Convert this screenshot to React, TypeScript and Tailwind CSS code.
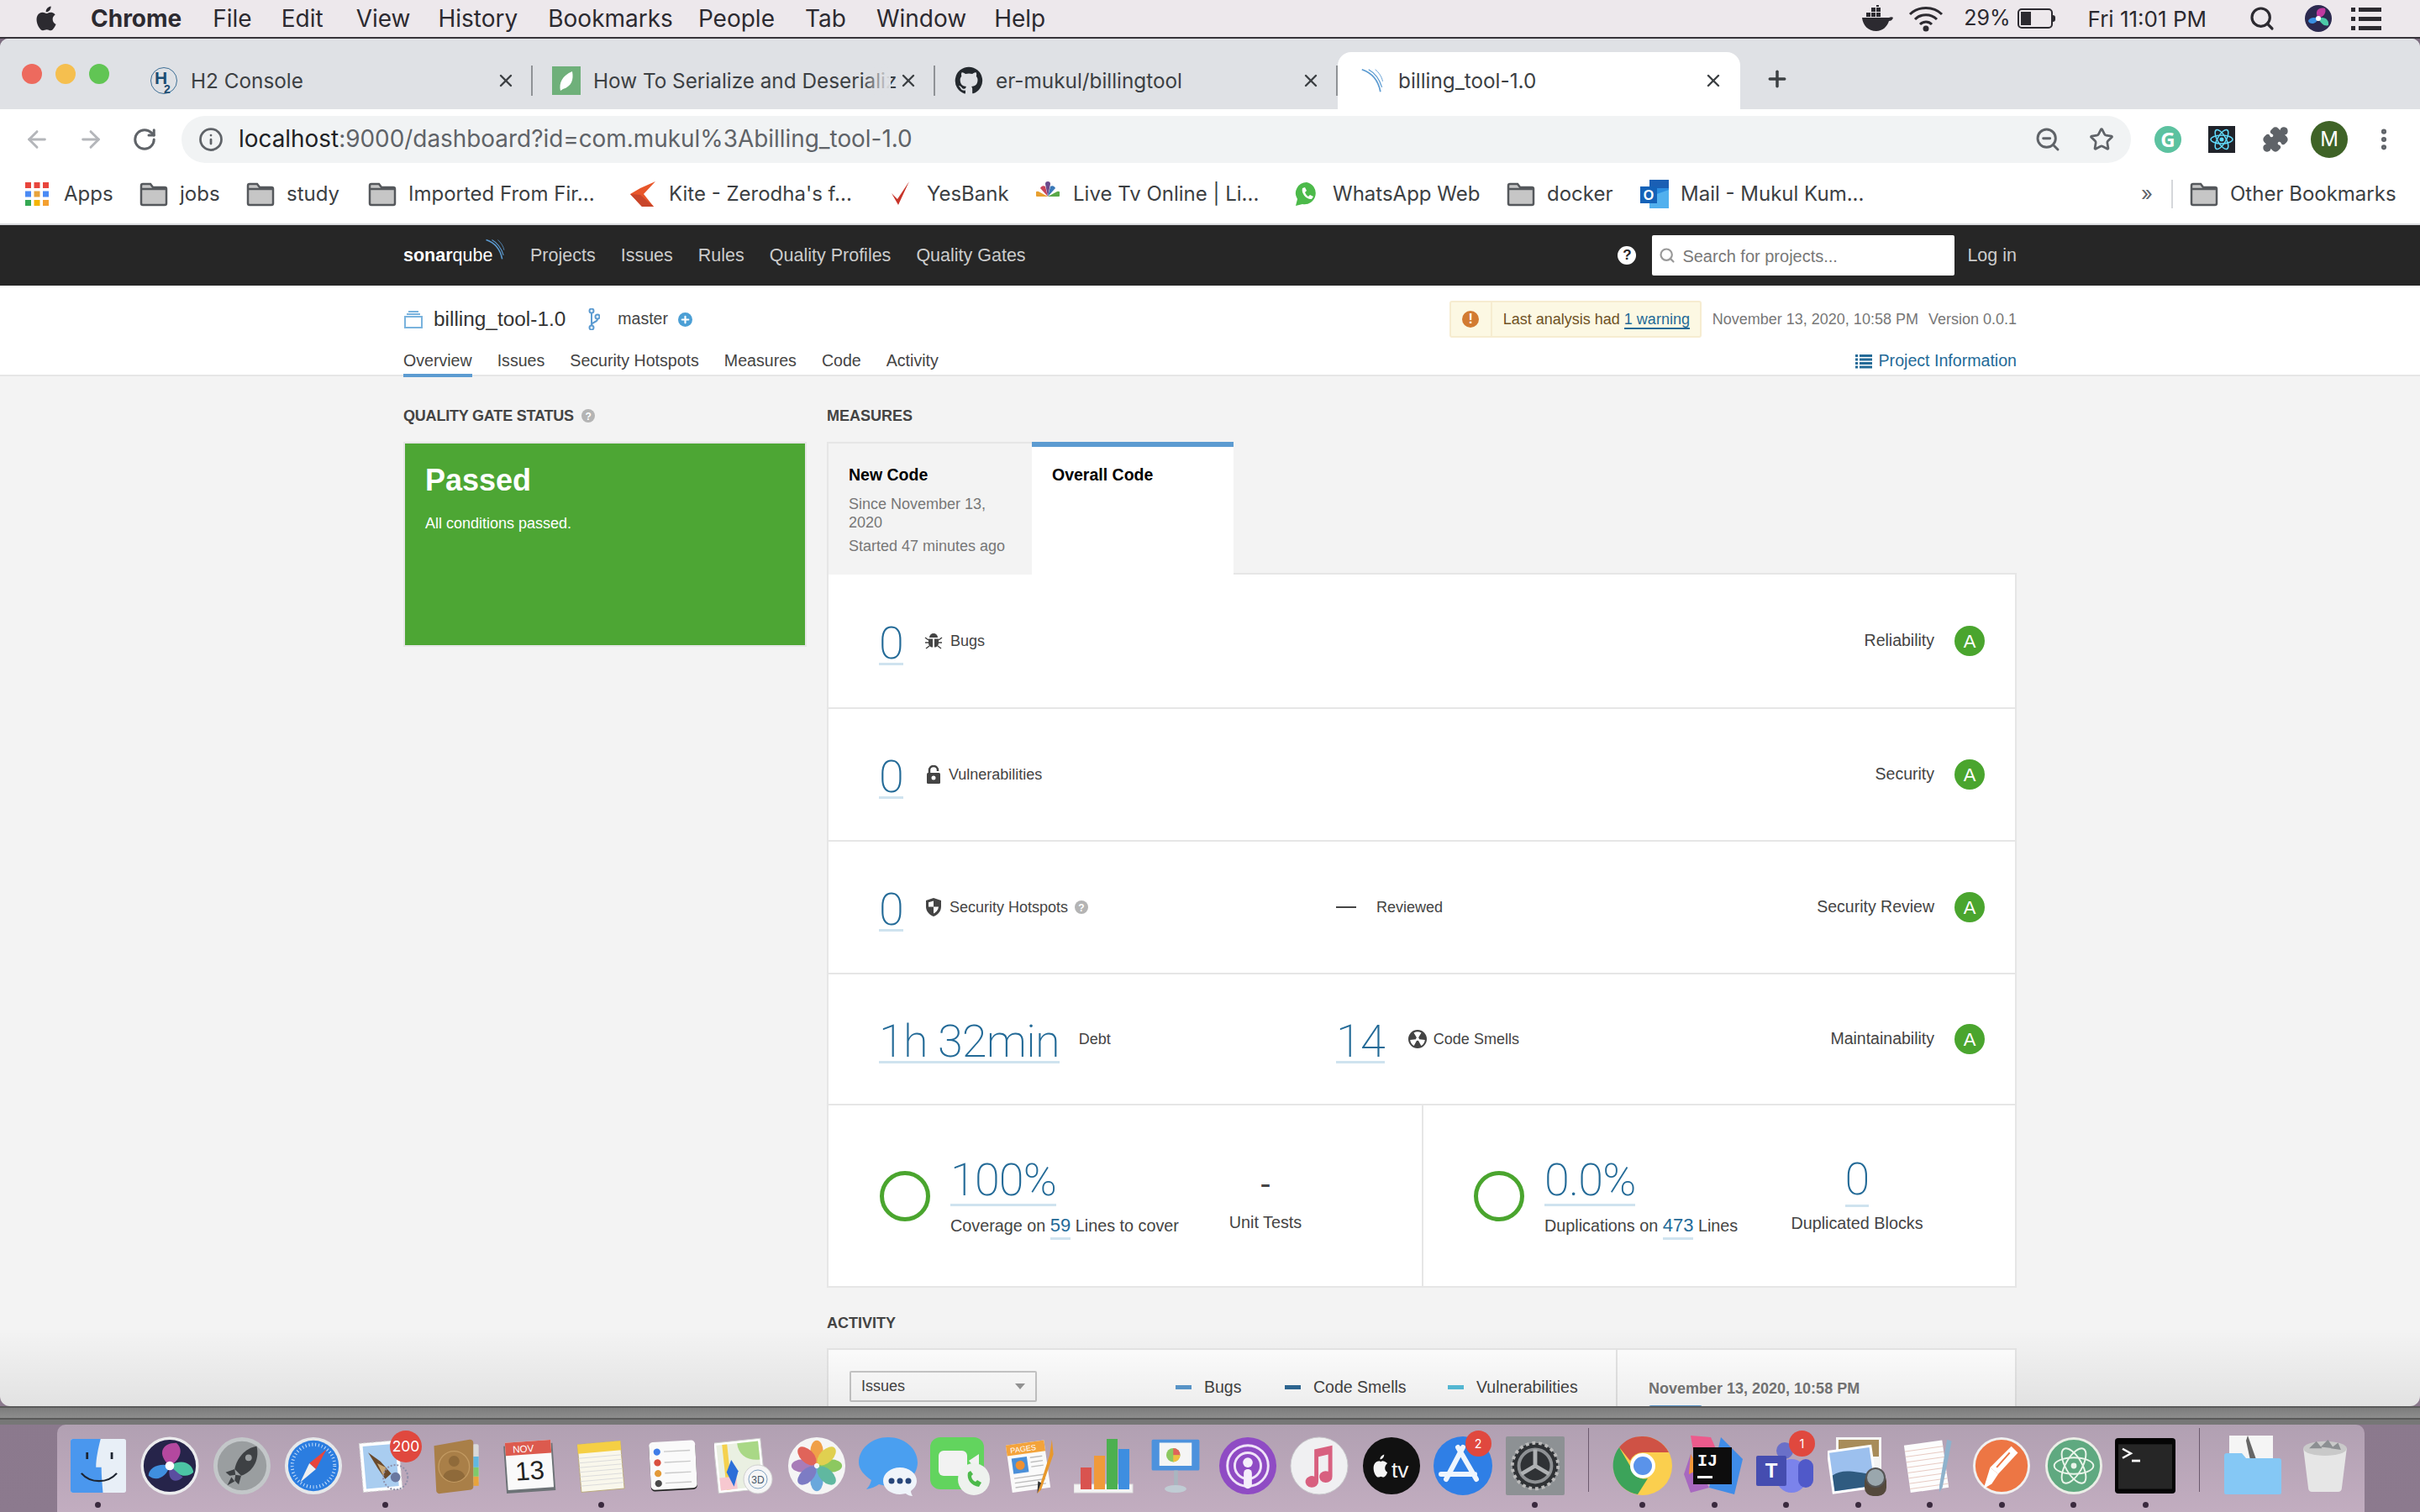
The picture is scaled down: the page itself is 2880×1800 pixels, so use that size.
import React from "react";
import { ArrowLeft, ArrowRight, RotateCw, Info, Star, X, Plus, Puzzle, Search, ZoomOut, EllipsisVertical } from "lucide-react";

const sys = "font-['Inter','Liberation_Sans',sans-serif]";
const sq = "font-['Liberation_Sans',Arial,sans-serif]";
const big = "font-['Roboto','Liberation_Sans',sans-serif] font-extralight";

function Folder() {
  return (
    <svg width="34" height="30" viewBox="0 0 34 30" className="shrink-0">
      <path d="M2 5a2 2 0 0 1 2-2h9l3 4h14a2 2 0 0 1 2 2v17a2 2 0 0 1-2 2H4a2 2 0 0 1-2-2z" fill="#c6c6c6" stroke="#55585c" strokeWidth="2.5" />
      <path d="M2 9h30" stroke="#55585c" strokeWidth="2.5" />
    </svg>
  );
}

function Tab({ icon, title, active, fade }: { icon: React.ReactNode; title: string; active?: boolean; fade?: boolean }) {
  return (
    <div className={`relative flex h-[68px] w-[479px] shrink-0 items-center ${active ? "rounded-t-[16px] bg-white" : ""}`}>
      <div className="flex w-[57px] shrink-0 justify-end">{icon}</div>
      <span className={`ml-[15px] whitespace-nowrap text-[24.3px] text-[#3c4043] ${sys}`}>
        {title}
      </span>
      {fade && <div className="absolute left-[392px] top-[12px] h-[40px] w-[34px] bg-gradient-to-r from-transparent to-[#dfe1e5]" />}
      <X size={24} strokeWidth={2.4} className="absolute right-[20px] text-[#3c4043]" />
      {!active && <div className="absolute right-0 top-[16px] h-[36px] w-[2px] bg-[#8f9296]" />}
    </div>
  );
}

function H2Icon() {
  return (
    <svg width="34" height="34" viewBox="0 0 34 34">
      <circle cx="17" cy="17" r="15.5" fill="none" stroke="#3e6f95" strokeWidth="1" />
      <text x="6" y="21" fontSize="21" fontWeight="700" fill="#1d4d73" fontFamily="Liberation Sans">H</text>
      <text x="17" y="32" fontSize="14" fontWeight="700" fill="#1d4d73" fontFamily="Liberation Sans">2</text>
    </svg>
  );
}
function LeafIcon() {
  return (
    <svg width="34" height="34" viewBox="0 0 34 34">
      <rect width="34" height="34" fill="#6fb07a" />
      <path d="M10 29c-2-9 2-18 14-23 2 10-1 18-11 21z" fill="#fff" />
    </svg>
  );
}
function GithubIcon() {
  return (
    <svg width="34" height="34" viewBox="0 0 24 24" fill="#24292e">
      <path d="M12 .5a11.5 11.5 0 0 0-3.64 22.41c.58.1.79-.25.79-.56v-2.2c-3.2.7-3.87-1.37-3.87-1.37-.52-1.33-1.28-1.69-1.28-1.69-1.05-.71.08-.7.08-.7 1.16.08 1.77 1.19 1.77 1.19 1.03 1.76 2.7 1.25 3.36.96.1-.75.4-1.25.73-1.54-2.55-.29-5.24-1.28-5.24-5.68 0-1.26.45-2.28 1.19-3.09-.12-.29-.52-1.46.11-3.05 0 0 .97-.31 3.17 1.18a11 11 0 0 1 5.77 0c2.2-1.49 3.17-1.18 3.17-1.18.63 1.59.23 2.76.11 3.05.74.81 1.19 1.83 1.19 3.09 0 4.41-2.69 5.38-5.25 5.67.41.36.78 1.06.78 2.13v3.16c0 .31.21.67.8.56A11.5 11.5 0 0 0 12 .5z" />
    </svg>
  );
}
function SonarWaves({ size = 30 }: { size?: number }) {
  return (
    <svg width={size} height={size} viewBox="0 0 34 34" fill="none" stroke="#5c9bd1">
      <path d="M2 2c12 4 22 14 25 30" strokeWidth="2" />
      <path d="M11 2c9 5 15 14 18 24" strokeWidth="1.4" />
      <path d="M20 2c5 4 9 10 10 16" strokeWidth="1" />
    </svg>
  );
}

function BM({ w, icon, label, gap = 14 }: { w: number; icon: React.ReactNode; label: string; gap?: number }) {
  return (
    <div className="flex shrink-0 items-center" style={{ width: w, gap }}>
      <div className="flex shrink-0 items-center justify-center">{icon}</div>
      <span className={`whitespace-nowrap text-[24px] text-[#3c4043] ${sys}`}>{label}</span>
    </div>
  );
}

function AppsIcon() {
  const c = ["#e8453c", "#e8453c", "#e8453c", "#4a8af4", "#e8a33c", "#4a8af4", "#34a853", "#f4b400", "#f4a030"];
  return (
    <svg width="28" height="28" viewBox="0 0 28 28">
      {c.map((f, i) => (
        <rect key={i} x={(i % 3) * 10.5} y={Math.floor(i / 3) * 10.5} width="7" height="7" fill={f} />
      ))}
    </svg>
  );
}

function Rating() {
  return (
    <div className={`flex h-[36px] w-[36px] shrink-0 items-center justify-center rounded-full bg-[#4aa52e] text-[22px] text-white ${sq}`}>A</div>
  );
}

function Num({ children, cls = "" }: { children: React.ReactNode; cls?: string }) {
  return (
    <span className={`mt-[9px] inline-block border-b-[3px] border-[#cfe3ef] text-[54px] leading-[46px] tracking-[-0.8px] text-[#236a97] ${big} ${cls}`}>
      {children}
    </span>
  );
}

function Row({ children, right, h }: { children: React.ReactNode; right: string; h: number }) {
  return (
    <div className={`flex items-center border-b-[2px] border-[#e6e6e6] pl-[60px] pr-[36px] text-[18px] text-[#444] ${sq}`} style={{ height: h }}>
      {children}
      <div className="ml-auto flex items-center gap-[24px] text-[19.5px]">
        <span>{right}</span>
        <Rating />
      </div>
    </div>
  );
}

const QMark = () => (
  <svg width="16" height="16" viewBox="0 0 16 16" className="shrink-0">
    <circle cx="8" cy="8" r="8" fill="#b4b4b4" />
    <text x="8" y="12.5" textAnchor="middle" fontSize="12" fontWeight="700" fill="#fff" fontFamily="Liberation Sans">?</text>
  </svg>
);

const BugIcon = () => (
  <svg width="22" height="22" viewBox="0 0 22 22" fill="#444" stroke="#444">
    <path d="M6 7a5 5 0 0 1 10 0z" stroke="none" />
    <path d="M5 8.500h5v10c-3 0-5-2-5-5zM12 8.500h5v5c0 3-2 5-5 5z" stroke="none" />
    <path d="M1 7l4 3M21 7l-4 3M1 13h4M21 13h-4M2 20l4-3M20 20l-4-3" strokeWidth="1.500" fill="none" />
  </svg>
);
const LockIcon = () => (
  <svg width="16" height="22" viewBox="0 0 16 22">
    <path d="M3 10V6a5 5 0 0 1 10 0v1" fill="none" stroke="#444" strokeWidth="2.500" />
    <rect y="9" width="16" height="13" rx="1.500" fill="#444" />
    <circle cx="8" cy="15" r="2.500" fill="#fff" />
  </svg>
);
const ShieldIcon = () => (
  <svg width="20" height="22" viewBox="0 0 20 22">
    <path d="M10 0l9 3v7c0 6-4 10-9 12C5 20 1 16 1 10V3z" fill="#444" />
    <path d="M10 3.500v7H4V5.200zM10 10.500h6c-.5 4-3 6.500-6 8z" fill="#fff" />
  </svg>
);
const SmellIcon = () => (
  <svg width="22" height="22" viewBox="0 0 22 22">
    <circle cx="11" cy="11" r="11" fill="#444" />
    <path d="M11 11L6.500 3.500a9 9 0 0 1 9 0zM11 11l-8.800 1a9 9 0 0 0 4.500 7zM11 11l8.800 1a9 9 0 0 1-4.500 7z" fill="#fff" />
    <circle cx="11" cy="11" r="2" fill="#fff" />
  </svg>
);

function Ring() {
  return <div className="h-[60px] w-[60px] shrink-0 rounded-full border-[5px] border-[#4aa52e]" />;
}

function Legend({ c, label, w }: { c: string; label: string; w: number }) {
  return (
    <div className="flex items-center gap-[15px]" style={{ width: w }}>
      <span className="h-[5px] w-[19px] shrink-0" style={{ background: c }} />
      <span className="whitespace-nowrap text-[19.500px] text-[#444]">{label}</span>
    </div>
  );
}

const round = (a: string, b: string) => `linear-gradient(${a}, ${b})`;

const icons: React.ReactNode[] = [
  // finder
  <svg viewBox="0 0 72 72" width="66" height="64" preserveAspectRatio="none"><rect width="72" height="72" rx="3" fill="#e8eff7" /><path d="M3 0h36c-3 12-6 26-6 38h7c0 11 1 22 2 34H3a3 3 0 0 1-3-3V3a3 3 0 0 1 3-3z" fill="#4a97ee" /><path d="M14 46c12 14 34 14 46 0" fill="none" stroke="#1d2430" strokeWidth="2.500" /><rect x="20" y="18" width="3" height="9" fill="#1d2430" /><rect x="52" y="18" width="3" height="9" fill="#1d2430" /></svg>,
  // siri
  <svg viewBox="0 0 72 72" width="70" height="72"><circle cx="36" cy="36" r="35.500" fill="#ececee" /><circle cx="36" cy="36" r="32" fill="#26244a" /><path d="M36 36C20 22 26 8 44 8c10 8 4 22-8 28z" fill="#b4489f" /><path d="M36 36c16-10 28-2 29 8-8 8-22 4-29-8z" fill="#4cc4a4" /><path d="M36 36c-4 14-16 20-26 12 0-10 14-16 26-12z" fill="#3f8fdf" /><path d="M36 36l16 14c-8 8-20 6-16-14z" fill="#5a4ea0" /><circle cx="36" cy="36" r="5.500" fill="#fff" /></svg>,
  // launchpad
  <svg viewBox="0 0 72 72" width="70" height="72"><circle cx="36" cy="36" r="35" fill="#c3c7c9" /><circle cx="36" cy="36" r="30" fill="#9a9ea0" /><path d="M54 12C40 14 30 26 27 40l8 8C48 44 58 30 54 12z" fill="#3e4144" /><circle cx="44" cy="26" r="4" fill="#9a9ea0" /><path d="M27 40l-11 4 5 4 7-1zM35 48l-3 11-5-5 1-7zM23 50l-5 10 9-5z" fill="#3e4144" /></svg>,
  // safari
  <svg viewBox="0 0 72 72" width="70" height="72"><circle cx="36" cy="36" r="35" fill="#e6e8ea" /><circle cx="36" cy="36" r="31" fill="#2b7de0" /><circle cx="36" cy="36" r="26" fill="none" stroke="#cfe4fb" strokeWidth="4" strokeDasharray="1 3" /><path d="M52 16L31 33l8 7z" fill="#e8453c" /><path d="M20 56l19-16-8-7z" fill="#f0f0f0" /></svg>,
  // mail
  <svg viewBox="0 0 72 72" width="70" height="72"><g transform="rotate(-5 36 36)"><rect x="6" y="6" width="48" height="60" fill="#fff" stroke="#d0d0d0" strokeDasharray="3 2" /><rect x="10" y="10" width="40" height="52" fill="#a9cdf0" /><path d="M16 18l14 12 12 16-8 6-8-14z" fill="#6a4a2c" /><path d="M26 32l10 6-4 10z" fill="#c8a878" /></g><circle cx="48" cy="50" r="15" fill="none" stroke="#8e8ea8" strokeWidth="2" strokeDasharray="2 2" /><circle cx="48" cy="50" r="6" fill="#6a78a0" /></svg>,
  // contacts
  <svg viewBox="0 0 72 72" width="66" height="72"><rect x="56" y="8" width="8" height="50" rx="2" fill="#d9d9d9" /><rect x="57" y="24" width="7" height="14" fill="#61b8e0" /><rect x="57" y="38" width="7" height="12" fill="#7fc96a" /><rect x="57" y="50" width="7" height="12" fill="#e8a33c" /><path d="M6 10L52 2a4 4 0 0 1 5 4v58a4 4 0 0 1-3 3L14 72a4 4 0 0 1-5-3z" fill="#a97f48" /><circle cx="32" cy="37" r="20" fill="none" stroke="#c29a62" strokeWidth="1.500" /><circle cx="32" cy="30" r="7" fill="#8f6a3a" /><path d="M18 50c2-12 26-12 28 0a18 18 0 0 1-28 0z" fill="#8f6a3a" /></svg>,
  // calendar
  <svg viewBox="0 0 72 72" width="70" height="72"><g transform="rotate(-4 36 36)"><rect x="6" y="10" width="60" height="58" fill="#6c7276" /><rect x="8" y="6" width="56" height="58" fill="#fafafa" /><rect x="8" y="6" width="56" height="16" fill="#dc5a4e" /><text x="30" y="19" textAnchor="middle" fontSize="12" fill="#fff" fontFamily="Liberation Sans">NOV</text><text x="36" y="53" textAnchor="middle" fontSize="32" fill="#222" fontFamily="Liberation Sans">13</text></g></svg>,
  // notes
  <svg viewBox="0 0 72 72" width="66" height="72"><g transform="rotate(-5 36 36)"><rect x="8" y="6" width="56" height="62" fill="#f9f7ec" stroke="#b8a878" strokeWidth="1" /><rect x="8" y="6" width="56" height="12" fill="#f5cf44" /><path d="M8 24h56M8 30h56M8 36h56M8 42h56M8 48h56M8 54h56M8 60h56" stroke="#dadada" strokeWidth="1" /></g></svg>,
  // reminders
  <svg viewBox="0 0 72 72" width="66" height="72"><g transform="rotate(-3 36 36)"><rect x="6" y="6" width="60" height="62" rx="5" fill="#222" /><rect x="6" y="4" width="60" height="62" rx="5" fill="#fafafa" /><circle cx="16" cy="17" r="4.500" fill="#3f7de8" /><circle cx="16" cy="31" r="4.500" fill="#d9503f" /><circle cx="16" cy="45" r="4.500" fill="#e39a38" /><circle cx="16" cy="58" r="4.500" fill="#4a4a4a" /><path d="M25 17h34M25 31h34M25 45h34M25 58h34" stroke="#c9c9c9" strokeWidth="1.500" /></g></svg>,
  // maps
  <svg viewBox="0 0 72 72" width="72" height="72"><g transform="rotate(-6 30 36)"><rect x="2" y="6" width="56" height="60" fill="#fff" stroke="#ccc" /><rect x="5" y="9" width="50" height="54" fill="#eaf0e2" /><path d="M30 9c0 14 10 22 25 22V9z" fill="#a9d886" /><rect x="12" y="9" width="6" height="54" fill="#f5d14d" /><path d="M5 48h20v15H5z" fill="#f7c8d0" /><path d="M22 32l7-14 7 14-7 18z" transform="translate(-8 10)" fill="#2b6fd8" /></g><circle cx="52" cy="52" r="17" fill="#f6f6f6" stroke="#d0d0d0" /><circle cx="52" cy="52" r="11" fill="none" stroke="#7ea0c0" /><text x="52" y="57" textAnchor="middle" fontSize="12" fill="#456" fontFamily="Liberation Sans">3D</text></svg>,
  // photos
  <svg viewBox="0 0 72 72" width="70" height="72"><circle cx="36" cy="36" r="35" fill="#f5f5f5" /><ellipse cx="36" cy="19" rx="8" ry="14" fill="#f0a048" /><ellipse cx="36" cy="53" rx="8" ry="14" fill="#6aa8dc" /><ellipse cx="19" cy="36" rx="14" ry="8" fill="#a87cb8" /><ellipse cx="53" cy="36" rx="14" ry="8" fill="#8cc860" /><ellipse cx="24" cy="24" rx="8" ry="14" transform="rotate(-45 24 24)" fill="#e0645a" /><ellipse cx="48" cy="24" rx="8" ry="14" transform="rotate(45 48 24)" fill="#e0d050" /><ellipse cx="24" cy="48" rx="8" ry="14" transform="rotate(45 24 48)" fill="#7d7cc4" /><ellipse cx="48" cy="48" rx="8" ry="14" transform="rotate(-45 48 48)" fill="#60b8a0" /></svg>,
  // messages
  <svg viewBox="0 0 72 72" width="72" height="72"><path d="M36 2c19 0 35 13 35 30 0 16-15 28-33 28-5 0-9-1-13-2-4 3-9 5-15 6 3-3 5-7 6-11C7 47 1 40 1 32 1 15 17 2 36 2z" fill="#4a9ff0" /><path d="M50 38c11 0 20 7 20 16 0 5-3 9-7 12 0 2 1 4 2 6-3 0-6-1-8-3-2 0-4 1-7 1-11 0-20-7-20-16s9-16 20-16z" fill="#eff4fa" /><circle cx="40" cy="54" r="3.500" fill="#27467a" /><circle cx="50" cy="54" r="3.500" fill="#27467a" /><circle cx="60" cy="54" r="3.500" fill="#27467a" /></svg>,
  // facetime
  <svg viewBox="0 0 72 72" width="72" height="72"><rect y="2" width="64" height="62" rx="12" fill="#62d45e" /><rect x="10" y="18" width="34" height="30" rx="6" fill="#f2f2f2" /><path d="M46 30l12-8v22z" fill="#f2f2f2" /><circle cx="52" cy="52" r="19" fill="#eef2ee" /><path d="M45 44c-2 8 4 16 13 17l3-5-5-3-2 2c-3-1-5-4-5-7l2-2-3-4z" fill="#4cba4a" /></svg>,
  // pages
  <svg viewBox="0 0 72 72" width="66" height="72"><g transform="rotate(-8 30 36)"><rect x="6" y="6" width="50" height="62" fill="#fafafa" /><rect x="6" y="6" width="50" height="14" fill="#f3a33b" /><text x="11" y="17" fontSize="10" fill="#fff" fontFamily="Liberation Sans">PAGES</text><rect x="11" y="24" width="20" height="20" fill="#4a8fd8" /><circle cx="21" cy="34" r="6" fill="#f09030" /><path d="M35 26h16M35 32h16M35 38h16M11 50h40M11 56h40M11 62h40" stroke="#bdbdbd" strokeWidth="1.500" /></g><path d="M62 2l-3 20-14 44-2 6 5-5 16-46z" fill="#e8982c" /><path d="M44 56l4 2-5 14z" fill="#333" /></svg>,
  // numbers
  <svg viewBox="0 0 72 72" width="72" height="72"><rect y="58" width="70" height="10" fill="#f4f4f4" stroke="#ddd" /><rect x="8" y="38" width="13" height="26" fill="#d9534f" /><rect x="24" y="24" width="13" height="40" fill="#f09a3a" /><rect x="39" y="4" width="13" height="60" fill="#4cb050" /><rect x="53" y="16" width="13" height="48" fill="#3e8ee0" /></svg>,
  // keynote
  <svg viewBox="0 0 72 72" width="66" height="72"><rect x="5" y="2" width="62" height="40" rx="2" fill="#4d92dd" /><rect x="15" y="6" width="42" height="30" fill="#f5f5f5" /><circle cx="33" cy="22" r="9" fill="#8cc860" /><path d="M33 22v-9a9 9 0 0 1 9 9z" fill="#e0645a" /><path d="M33 22h9a9 9 0 0 1-9 9z" fill="#f0c040" /><rect x="34" y="42" width="5" height="22" fill="#a9b6c0" /><ellipse cx="36" cy="66" rx="14" ry="5" fill="#c0ccd4" /></svg>,
  // podcasts
  <svg viewBox="0 0 72 72" width="70" height="72"><circle cx="36" cy="36" r="35" fill="#8f4bc4" /><circle cx="36" cy="36" r="25" fill="none" stroke="#f0e4f8" strokeWidth="3" /><circle cx="36" cy="36" r="16" fill="none" stroke="#f0e4f8" strokeWidth="3" /><circle cx="36" cy="32" r="6" fill="#f5eefb" /><rect x="31" y="40" width="10" height="24" rx="5" fill="#f5eefb" /></svg>,
  // music
  <svg viewBox="0 0 72 72" width="70" height="72"><circle cx="36" cy="36" r="35" fill="#f0f0f2" stroke="#c9c9cc" /><path d="M30 16l22-5v38a8 7 0 1 1-5-6V22l-12 3v30a8 7 0 1 1-5-6z" fill="#d8607f" /></svg>,
  // tv
  <svg viewBox="0 0 72 72" width="70" height="72"><circle cx="36" cy="36" r="35" fill="#111" /><path d="M22 30c-5 0-8 3-8 9 0 5 3 11 6 11 1 0 2-1 3-1s2 1 3 1c2 0 4-3 5-6-4-2-4-8 0-11-2-2-4-3-6-3-1 0-2 1-3 1zm0-2c0-3 2-5 5-6 0 3-2 6-5 6z" fill="#f5f5f5" /><text x="36" y="50" fontSize="27" fill="#f5f5f5" fontFamily="Liberation Sans">tv</text></svg>,
  // app store
  <svg viewBox="0 0 72 72" width="72" height="72"><circle cx="36" cy="36" r="35" fill="#2f7fe6" /><path d="M36 14L16 52M30 14l22 38M10 46h40" stroke="#eef5fd" strokeWidth="6" strokeLinecap="round" fill="none" /></svg>,
  // system prefs
  <svg viewBox="0 0 72 72" width="70" height="72"><rect width="72" height="72" rx="2" fill="#8d9194" /><circle cx="36" cy="36" r="28" fill="#2f3235" /><circle cx="36" cy="36" r="28" fill="none" stroke="#bbb" strokeWidth="4" strokeDasharray="4 4" /><circle cx="36" cy="36" r="20" fill="none" stroke="#8e9194" strokeWidth="4" /><path d="M36 36V16M36 36L19 46M36 36l17 10" stroke="#aeb1b3" strokeWidth="5" /></svg>,
];

const icons2: React.ReactNode[] = [
  // chrome
  <svg viewBox="0 0 72 72" width="72" height="72"><circle cx="36" cy="36" r="35" fill="#fbcf4e" /><path d="M36 1a35 35 0 0 1 31 19H36a16 16 0 0 0-15 10L8 14A35 35 0 0 1 36 1z" fill="#cf5245" /><path d="M8 14l14 24a16 16 0 0 0 20 13L30 70A35 35 0 0 1 8 14z" fill="#3ca35a" /><circle cx="36" cy="36" r="15" fill="#fff" /><circle cx="36" cy="36" r="11" fill="#5a93ea" /></svg>,
  // IJ
  <svg viewBox="0 0 72 72" width="74" height="72"><path d="M8 0l24 2 8 18-28 4z" fill="#ec5a8c" /><path d="M44 2l26 26-10 42-30-8z" fill="#3f8ce8" /><path d="M8 22L0 46l8 22 22-6z" fill="#a868c0" /><path d="M8 22l10 18-12 6z" fill="#f29838" /><rect x="11" y="14" width="46" height="44" fill="#0d0d0d" /><text x="16" y="36" fontSize="20" fontWeight="700" fill="#fff" fontFamily="Liberation Mono">IJ</text><rect x="16" y="48" width="18" height="3" fill="#fff" /></svg>,
  // teams
  <svg viewBox="0 0 72 72" width="72" height="72"><circle cx="34" cy="18" r="10" fill="#6a70c8" /><rect x="24" y="28" width="36" height="40" rx="18" fill="#7b83eb" /><rect x="50" y="28" width="18" height="34" rx="9" fill="#5059c9" /><rect x="0" y="24" width="36" height="36" rx="2" fill="#454db0" /><text x="18" y="50" textAnchor="middle" fontSize="24" fontWeight="700" fill="#fff" fontFamily="Liberation Sans">T</text></svg>,
  // preview
  <svg viewBox="0 0 72 72" width="72" height="72"><rect x="10" y="2" width="54" height="50" fill="#f5f5f5" /><rect x="13" y="5" width="48" height="20" fill="#a88c5a" /><g transform="rotate(-8 30 40)"><rect x="2" y="14" width="54" height="52" fill="#fff" /><rect x="5" y="17" width="48" height="46" fill="#9cc0ee" /><path d="M5 44c12-6 24-2 48 6v13H5z" fill="#2f5b80" /></g><rect x="44" y="44" width="26" height="28" rx="10" fill="#54493c" /><circle cx="57" cy="50" r="11" fill="#9aa7ad" stroke="#555" strokeWidth="2" /></svg>,
  // textedit
  <svg viewBox="0 0 72 72" width="66" height="72"><g transform="rotate(-8 30 36)"><rect x="6" y="6" width="50" height="62" fill="#fdfdfd" /><path d="M6 14h50M6 21h50M6 28h50M6 35h50M6 42h50M6 49h50M6 56h50M6 63h50" stroke="#e6c8c0" strokeWidth="1" /></g><path d="M58 2l6 2-12 60-4 6 0-8z" fill="#8fb2cc" /></svg>,
  // postman
  <svg viewBox="0 0 72 72" width="70" height="72"><circle cx="36" cy="36" r="35" fill="#f0f0f0" /><circle cx="36" cy="36" r="32" fill="#ed7644" /><path d="M48 12l8 8-24 26-10-8z" fill="#fff" /><path d="M22 38l10 8-8 12-10 6z" fill="#fff" /><path d="M30 38l16-18" stroke="#ed7644" strokeWidth="2" /></svg>,
  // atom
  <svg viewBox="0 0 72 72" width="70" height="72"><circle cx="36" cy="36" r="35" fill="#eaeee6" /><circle cx="36" cy="36" r="32" fill="#5fa980" /><g fill="none" stroke="#eaf5ea" strokeWidth="2"><ellipse cx="36" cy="36" rx="24" ry="10" /><ellipse cx="36" cy="36" rx="24" ry="10" transform="rotate(60 36 36)" /><ellipse cx="36" cy="36" rx="24" ry="10" transform="rotate(120 36 36)" /></g><circle cx="36" cy="36" r="3.500" fill="#eaf5ea" /></svg>,
  // terminal
  <svg viewBox="0 0 72 72" width="72" height="66" preserveAspectRatio="none"><rect width="72" height="72" rx="4" fill="#050505" /><rect x="4" y="8" width="64" height="58" fill="#262626" /><path d="M9 14l10 6-10 6" fill="none" stroke="#fff" strokeWidth="2.500" /><rect x="20" y="28" width="10" height="3" fill="#fff" /></svg>,
];

const folderIcon = (
  <svg viewBox="0 0 72 72" width="72" height="72"><rect x="8" y="0" width="52" height="40" fill="#f5f5f5" /><path d="M30 0l12 34h-8L28 6z" fill="#666" /><path d="M2 24a3 3 0 0 1 3-3h18l5 6h39a3 3 0 0 1 3 3v38a2 2 0 0 1-2 2H4a2 2 0 0 1-2-2z" fill="#85c8f5" /></svg>
);
const trashIcon = (
  <svg viewBox="0 0 72 72" width="62" height="72"><path d="M6 12h60l-7 56a5 5 0 0 1-5 4H18a5 5 0 0 1-5-4z" fill="#e6e6e6" /><ellipse cx="36" cy="12" rx="30" ry="10" fill="#c9c9c9" /><path d="M14 12l10-10 8 10zM30 10l10-10 8 12zM44 12l10-8 4 10z" fill="#8c8f92" /></svg>
);

function DockItem({ icon, dot, badge }: { icon: React.ReactNode; dot?: boolean; badge?: { text: string; x: number; y: number; s: number } }) {
  return (
    <div className="relative flex h-[104px] w-[85.500px] shrink-0 justify-center pt-[13px]">
      <div className="flex h-[72px] items-center justify-center">{icon}</div>
      {badge && (
        <div
          className={`absolute flex items-center justify-center rounded-full bg-[#e0483e] text-[#fff] ${sys}`}
          style={{ left: badge.x, top: badge.y, width: badge.s, height: badge.s, fontSize: badge.s * 0.46 }}
        >
          {badge.text}
        </div>
      )}
      {dot && <span className="absolute left-[39px] top-[92px] h-[7px] w-[7px] rounded-full bg-[#3a2a3e]" />}
    </div>
  );
}

export default function App() {
  const dots1 = [0, 4, 7, 20];
  const dots2 = [0, 1, 2, 3, 4, 5, 6, 7];
  return (
    <div className="relative flex h-[1800px] w-[2880px] flex-col overflow-hidden" style={{ background: round("#7d6d80", "#8c7a8e") }}>
      {/* macOS menu bar */}
      <div className={`flex h-[44px] shrink-0 items-center bg-[#ede8ec] text-[28px] text-[#2c2a30] ${sys}`}>
        <svg width="30" height="34" viewBox="0 0 24 28" className="ml-[41px] shrink-0" fill="#2c2a30">
          <path d="M17.500 14.800c0-3 2.400-4.400 2.500-4.500-1.400-2-3.500-2.300-4.300-2.300-1.800-.2-3.500 1.100-4.400 1.100-.9 0-2.300-1.100-3.800-1-2 0-3.800 1.100-4.800 2.900-2 3.600-.5 8.900 1.500 11.800 1 1.400 2.100 3 3.700 3 1.500-.1 2-.9 3.800-.9s2.300.9 3.800.9c1.600 0 2.600-1.400 3.600-2.900 1.100-1.600 1.600-3.200 1.600-3.300-.1 0-3.100-1.200-3.200-4.800zM14.600 5.900c.8-1 1.400-2.400 1.200-3.900-1.200.1-2.700.8-3.600 1.900-.8.9-1.500 2.300-1.300 3.700 1.400.1 2.800-.7 3.700-1.700z" />
        </svg>
        <span className="ml-[37px] font-bold">Chrome</span>
        <span className="ml-[37px]">File</span>
        <span className="ml-[35px]">Edit</span>
        <span className="ml-[39px]">View</span>
        <span className="ml-[33px]">History</span>
        <span className="ml-[36px]">Bookmarks</span>
        <span className="ml-[30px]">People</span>
        <span className="ml-[36px]">Tab</span>
        <span className="ml-[36px]">Window</span>
        <span className="ml-[33px]">Help</span>
        <div className="ml-auto flex items-center">
          <svg width="38" height="32" viewBox="0 0 38 32" fill="#2c2a30">
            <path d="M1 15h32c2-1 4-1 5 0-1 3-3 4-5 4-2 7-8 12-15 12C8 31 2 24 1 15z" />
            <path d="M6 9h5v5H6zM12 9h5v5h-5zM18 9h5v5h-5zM12 3h5v5h-5zM18 3h5v5h-5zM18 0h3v2h-3z" />
          </svg>
          <svg width="42" height="32" viewBox="0 0 42 32" fill="none" stroke="#2c2a30" strokeWidth="3" className="ml-[18px]">
            <path d="M2 11c10-10 28-10 38 0M8 17c7-7 19-7 26 0M14 23c4-4 10-4 14 0" />
            <circle cx="21" cy="28" r="2" fill="#2c2a30" />
          </svg>
          <span className="ml-[24px] text-[25px]">29%</span>
          <div className="ml-[8px] flex h-[24px] w-[42px] items-center rounded-[5px] border-[2px] border-[#2c2a30] p-[2px]">
            <div className="h-full w-[12px] bg-[#2c2a30]" />
          </div>
          <div className="h-[8px] w-[3px] rounded-r bg-[#2c2a30]" />
          <span className="ml-[39px] text-[26px]">Fri 11:01 PM</span>
          <Search size={32} strokeWidth={2.4} className="ml-[50px] text-[#2c2a30]" />
          <svg width="32" height="32" viewBox="0 0 32 32" className="ml-[35px]">
            <circle cx="16" cy="16" r="16" fill="#2c2a50" />
            <path d="M16 16C10 6 18 2 24 4c2 5-2 10-8 12z" fill="#c03aa0" />
            <path d="M16 16c8-3 13 2 12 8-5 2-9-2-12-8z" fill="#4cc9a8" />
            <path d="M16 16c-3 8-11 7-12 3 1-4 8-5 12-3z" fill="#3a8fe0" />
            <circle cx="16" cy="16" r="3" fill="#fff" />
          </svg>
          <svg width="36" height="28" viewBox="0 0 36 28" fill="#2c2a30" className="ml-[23px] mr-[46px]">
            <rect width="5" height="5" y="1" /><rect x="9" y="1" width="27" height="5" />
            <rect width="5" height="5" y="12" /><rect x="9" y="12" width="27" height="5" />
            <rect width="5" height="5" y="23" /><rect x="9" y="23" width="27" height="5" />
          </svg>
        </div>
      </div>
      <div className="h-[2px] shrink-0 bg-[#37333a]" />

      {/* Chrome window */}
      <div className="relative z-10 flex h-[1628px] shrink-0 flex-col overflow-hidden rounded-b-[12px] rounded-t-[10px] bg-[#f3f3f3]">
        {/* tab strip */}
        <div className="relative flex h-[84px] shrink-0 items-end bg-[#dfe1e5]">
          <div className="absolute left-[26px] top-[30px] flex gap-[16px]">
            <span className="h-[24px] w-[24px] rounded-full bg-[#ed6a5e]" />
            <span className="h-[24px] w-[24px] rounded-full bg-[#f5bf4f]" />
            <span className="h-[24px] w-[24px] rounded-full bg-[#61c554]" />
          </div>
          <div className="ml-[155px] flex">
            <Tab icon={<H2Icon />} title="H2 Console" />
            <Tab icon={<LeafIcon />} title="How To Serialize and Deserializ" fade />
            <Tab icon={<GithubIcon />} title="er-mukul/billingtool" />
            <Tab icon={<SonarWaves />} title="billing_tool-1.0" active />
          </div>
          <Plus size={30} strokeWidth={2.8} className="mb-[21px] ml-[29px] text-[#3c4043]" />
        </div>
        {/* address bar */}
        <div className="flex h-[72px] shrink-0 items-center bg-white">
          <ArrowLeft size={32} strokeWidth={2.2} className="ml-[28px] text-[#b4b6ba]" />
          <ArrowRight size={32} strokeWidth={2.2} className="ml-[32px] text-[#b4b6ba]" />
          <RotateCw size={30} strokeWidth={2.4} className="ml-[33px] text-[#5f6368]" />
          <div className="ml-[29px] flex h-[56px] w-[2320px] items-center rounded-full bg-[#f1f3f4] pl-[20px] pr-[20px]">
            <Info size={30} strokeWidth={2.2} className="text-[#5f6368]" />
            <span className={`ml-[18px] whitespace-nowrap text-[27.9px] text-[#5f6368] ${sys}`}>
              <span className="text-[#202124]">localhost</span>:9000/dashboard?id=com.mukul%3Abilling_tool-1.0
            </span>
            <ZoomOut size={32} strokeWidth={2.2} className="ml-auto text-[#5f6368]" />
            <Star size={30} strokeWidth={2.2} className="ml-[33px] text-[#5f6368]" />
          </div>
          <div className="ml-[28px] flex h-[32px] w-[32px] items-center justify-center rounded-full bg-[#5cc2a0] text-[24px] font-bold text-white">G</div>
          <svg width="32" height="32" viewBox="0 0 32 32" className="ml-[32px]">
            <rect width="32" height="32" fill="#20232a" />
            <g fill="none" stroke="#61dafb" strokeWidth="1.500">
              <ellipse cx="16" cy="16" rx="13" ry="5" />
              <ellipse cx="16" cy="16" rx="13" ry="5" transform="rotate(60 16 16)" />
              <ellipse cx="16" cy="16" rx="13" ry="5" transform="rotate(120 16 16)" />
            </g>
            <circle cx="16" cy="16" r="2.500" fill="#61dafb" />
          </svg>
          <Puzzle size={32} fill="#5f6368" className="ml-[32px] text-[#5f6368]" />
          <div className={`ml-[26px] flex h-[44px] w-[44px] items-center justify-center rounded-full bg-[#3f6327] text-[24px] text-white ${sys}`}>M</div>
          <EllipsisVertical size={32} strokeWidth={2.6} className="ml-[27px] text-[#5f6368]" />
        </div>
        {/* bookmarks */}
        <div className="flex h-[64px] shrink-0 items-center bg-white pb-[6px] pl-[30px]">
          <BM w={136} icon={<AppsIcon />} label="Apps" gap={18} />
          <BM w={127} icon={<Folder />} label="jobs" />
          <BM w={145} icon={<Folder />} label="study" />
          <BM w={310} icon={<Folder />} label="Imported From Fir..." />
          <BM w={310} icon={
            <svg width="34" height="30" viewBox="0 0 34 30"><path d="M32 0L14 8 2 15l14 15h14L18 15z" fill="#e8562a" /><path d="M2 15l14 15h14L14 16z" fill="#c8452a" /></svg>
          } label="Kite - Zerodha's f..." />
          <BM w={175} icon={
            <svg width="28" height="30" viewBox="0 0 28 30"><path d="M24 0L11 28 3 14l7 7z" fill="#c8352a" /></svg>
          } label="YesBank" gap={17} />
          <BM w={308} icon={
            <svg width="28" height="30" viewBox="0 0 28 30">
              <path d="M14 18L5 8a4 4 0 0 1 6-2z" fill="#c8445a" /><path d="M14 18L11 3a3 3 0 0 1 6 0z" fill="#6a4a8c" /><path d="M14 18l3-12a4 4 0 0 1 6 2z" fill="#3a78b8" />
              <path d="M14 18L3 12a3 3 0 0 0-2 6z" fill="#e8a030" /><path d="M14 18l11-6a3 3 0 0 1 2 6z" fill="#5aa848" />
            </svg>
          } label="Live Tv Online | Li..." gap={16} />
          <BM w={252} icon={
            <svg width="28" height="30" viewBox="0 0 28 30"><path d="M14 1a13 13 0 0 0-11 20L1 29l8-2a13 13 0 1 0 5-26z" fill="#4cba4a" /><path d="M9 8c-2 6 5 14 11 13l2-3-4-2-2 2c-2-1-3-3-4-5l2-2-2-4z" fill="#fff" /></svg>
          } label="WhatsApp Web" gap={17} />
          <BM w={159} icon={<Folder />} label="docker" />
          <BM w={596} icon={
            <svg width="34" height="34" viewBox="0 0 34 34"><rect x="11" width="23" height="34" fill="#2b8de0" /><rect x="11" width="23" height="10" fill="#1a5fb4" /><path d="M11 20l23-8v22H11z" fill="#52b0ee" /><rect y="8" width="20" height="20" fill="#1462b8" /><text x="10" y="24" textAnchor="middle" fontSize="16" fontWeight="700" fill="#fff" fontFamily="Liberation Sans">O</text></svg>
          } label="Mail - Mukul Kum..." />
          <span className={`w-[36px] text-[24px] text-[#5f6368] ${sys}`}>»</span>
          <div className="mr-[20px] h-[34px] w-[2px] bg-[#d5d7da]" />
          <BM w={260} icon={<Folder />} label="Other Bookmarks" />
        </div>
        <div className="h-[2px] shrink-0 bg-[#d9dadd]" />

        {/* SonarQube page */}
        <div className={`relative flex min-h-0 flex-1 flex-col ${sq}`}>
          {/* nav */}
          <div className="flex h-[72px] shrink-0 justify-center bg-[#262626]">
            <div className="flex w-[1920px] items-center text-[21.5px] text-[#ccc]">
              <div className="relative mr-[30px] flex w-[121px] items-center">
                <span className="text-[21.5px] text-white"><span className="font-bold">sonar</span>qube</span>
                <svg width="26" height="26" viewBox="0 0 34 34" fill="none" stroke="#5c9bd1" className="absolute left-[97px] top-[-4px]">
                  <path d="M2 2c12 4 22 14 25 30" strokeWidth="2" />
                  <path d="M11 2c9 5 15 14 18 24" strokeWidth="1.400" />
                  <path d="M20 2c5 4 9 10 10 16" strokeWidth="1" />
                </svg>
              </div>
              <div className="flex gap-[30px]">
                <span>Projects</span>
                <span>Issues</span>
                <span>Rules</span>
                <span>Quality Profiles</span>
                <span>Quality Gates</span>
              </div>
              <div className="ml-auto flex items-center">
                <div className="mr-[19px] flex h-[22px] w-[22px] items-center justify-center rounded-full bg-white text-[17px] font-bold text-[#262626]">?</div>
                <div className="flex h-[48px] w-[360px] items-center rounded-[2px] bg-white pl-[8px] text-[#777]">
                  <Search size={20} strokeWidth={2.6} className="text-[#999]" />
                  <span className="ml-[8px] pt-[2px] text-[20px]">Search for projects...</span>
                </div>
                <span className="ml-[15px]">Log in</span>
              </div>
            </div>
          </div>
          {/* project header */}
          <div className="flex h-[108px] shrink-0 justify-center border-b-[2px] border-[#e6e6e6] bg-white">
            <div className="w-[1920px]">
              <div className="flex h-[62px] items-center pt-[18px]">
                <svg width="22" height="22" viewBox="0 0 22 22" className="ml-[1px] shrink-0" fill="none" stroke="#7ab3dd" strokeWidth="2">
                  <rect x="1" y="8" width="20" height="13" /><path d="M3 5h16M5 2h12" />
                </svg>
                <span className="ml-[13px] text-[24.4px] text-[#333]">billing_tool-1.0</span>
                <svg width="14" height="26" viewBox="0 0 14 26" className="ml-[27px] shrink-0" fill="none" stroke="#5c9bd1" strokeWidth="2">
                  <circle cx="4" cy="3" r="2.500" /><circle cx="4" cy="23" r="2.500" /><circle cx="11" cy="10" r="2.500" />
                  <path d="M4 6v14M11 13c0 4-7 3-7 7" />
                </svg>
                <span className="ml-[21px] text-[19.500px] text-[#444]">master</span>
                <div className="ml-[12px] flex h-[17px] w-[17px] items-center justify-center rounded-full bg-[#4b9fd5]">
                  <Plus size={13} strokeWidth={4} className="text-white" />
                </div>
                <div className="ml-auto flex h-[44px] w-[300px] items-center rounded-[3px] border-[2px] border-[#f6ecd0] bg-[#fcf8e3] text-[18px] text-[#6f5225]">
                  <div className="flex h-full w-[49px] items-center justify-center border-r-[2px] border-[#f6ecd0]">
                    <div className="flex h-[20px] w-[20px] items-center justify-center rounded-full bg-[#d27b32] text-[16px] font-bold text-white">!</div>
                  </div>
                  <span className="ml-[13px] whitespace-nowrap">Last analysis had <span className="border-b-[2px] border-[#236a97] text-[#236a97]">1 warning</span></span>
                </div>
                <span className="ml-[13px] text-[18px] text-[#777]">November 13, 2020, 10:58 PM</span>
                <span className="ml-[12px] text-[18px] text-[#777]">Version 0.0.1</span>
              </div>
              <div className="flex h-[44px] items-start pt-[13px] text-[19.6px] text-[#444]">
                <div className="flex gap-[30px]">
                  <span className="relative">Overview<span className="absolute left-0 right-0 top-[30px] h-[4px] bg-[#5c9bd1]" /></span>
                  <span>Issues</span>
                  <span>Security Hotspots</span>
                  <span>Measures</span>
                  <span>Code</span>
                  <span>Activity</span>
                </div>
                <div className="ml-auto flex items-center gap-[8px] text-[#236a97]">
                  <svg width="20" height="18" viewBox="0 0 20 18" fill="#236a97">
                    <rect width="3" height="3" y="1" /><rect x="5" y="1" width="15" height="3" />
                    <rect width="3" height="3" y="5.500" /><rect x="5" y="5.500" width="15" height="3" />
                    <rect width="3" height="3" y="10" /><rect x="5" y="10" width="15" height="3" />
                    <rect width="3" height="3" y="14.500" /><rect x="5" y="14.500" width="15" height="3" />
                  </svg>
                  <span>Project Information</span>
                </div>
              </div>
            </div>
          </div>
          {/* body */}
          <div className="flex min-h-0 flex-1 justify-center overflow-hidden">
            <div className="flex w-[1920px] gap-[24px]">
              {/* left column */}
              <div className="w-[480px] shrink-0">
                <div className="flex h-[78px] items-center gap-[9px] pt-[16px] text-[18px] font-bold tracking-[-0.2px] text-[#444]">
                  <span>QUALITY GATE STATUS</span>
                  <QMark />
                </div>
                <div className="h-[244px] border-[2px] border-[#e6e6e6]">
                  <div className="h-full bg-[#4da634] pl-[24px] pt-[22px] text-white">
                    <div className="text-[36px] font-bold leading-[44px]">Passed</div>
                    <div className="mt-[16px] text-[18px]">All conditions passed.</div>
                  </div>
                </div>
              </div>
              {/* right column */}
              <div className="w-[1416px] shrink-0">
                <div className="flex h-[78px] items-center pt-[16px] text-[18px] font-bold text-[#444]">MEASURES</div>
                {/* leak tabs */}
                <div className="relative z-10 mb-[-2px] flex h-[158px]">
                  <div className="h-[158px] w-[244px] border-l-[2px] border-t-[2px] border-[#e6e6e6] bg-[#f3f3f3] pl-[24px] pt-[23px]">
                    <div className="text-[19.500px] font-bold text-black">New Code</div>
                    <div className="mt-[9px] text-[18px] leading-[22px] text-[#777]">Since November 13,<br />2020</div>
                    <div className="mt-[6px] text-[18px] leading-[22px] text-[#777]">Started 47 minutes ago</div>
                  </div>
                  <div className="h-[160px] w-[240px] border-t-[6px] border-[#5c9bd1] bg-white pl-[24px] pt-[19px]">
                    <div className="text-[19.500px] font-bold text-black">Overall Code</div>
                  </div>
                </div>
                {/* measures panel */}
                <div className="border-[2px] border-[#e6e6e6] bg-white">
                  <Row right="Reliability" h={160}>
                    <Num>0</Num>
                    <span className="ml-[25px]"><BugIcon /></span>
                    <span className="ml-[9px]">Bugs</span>
                  </Row>
                  <Row right="Security" h={158}>
                    <Num>0</Num>
                    <span className="ml-[28px]"><LockIcon /></span>
                    <span className="ml-[10px]">Vulnerabilities</span>
                  </Row>
                  <Row right="Security Review" h={158}>
                    <div className="flex w-[544px] items-center">
                      <Num>0</Num>
                      <span className="ml-[26px]"><ShieldIcon /></span>
                      <span className="ml-[9px]">Security Hotspots</span>
                      <span className="ml-[8px]"><QMark /></span>
                    </div>
                    <span className="h-[2.500px] w-[24px] bg-[#444]" />
                    <span className="ml-[24px]">Reviewed</span>
                  </Row>
                  <Row right="Maintainability" h={156}>
                    <div className="flex w-[544px] items-center">
                      <Num>1h 32min</Num>
                      <span className="ml-[23px]">Debt</span>
                    </div>
                    <Num>14</Num>
                    <span className="ml-[28px]"><SmellIcon /></span>
                    <span className="ml-[8px]">Code Smells</span>
                  </Row>
                  {/* coverage / duplications */}
                  <div className="flex h-[215px] text-[19.8px] text-[#444]">
                    <div className="flex w-[708px] shrink-0 items-center border-r-[2px] border-[#e6e6e6] pl-[61px]">
                      <Ring />
                      <div className="ml-[24px] flex w-[330px] flex-col items-start">
                        <Num cls="pb-[5px]">100%</Num>
                        <div className="mt-[6px] whitespace-nowrap">Coverage on <span className="border-b-[3px] border-[#cfe3ef] pb-[2px] text-[22px] text-[#236a97]">59</span> Lines to cover</div>
                      </div>
                      <div className="flex w-[90px] flex-col items-center pt-[12px]">
                        <span className="h-[40px] text-[39px] leading-[40px]">-</span>
                        <span className="mt-[12px] whitespace-nowrap">Unit Tests</span>
                      </div>
                    </div>
                    <div className="flex flex-1 items-center pl-[60px]">
                      <Ring />
                      <div className="ml-[24px] flex w-[290px] flex-col items-start">
                        <Num cls="pb-[5px]">0.0%</Num>
                        <div className="mt-[6px] whitespace-nowrap">Duplications on <span className="border-b-[3px] border-[#cfe3ef] pb-[2px] text-[22px] text-[#236a97]">473</span> Lines</div>
                      </div>
                      <div className="ml-[2px] flex w-[160px] flex-col items-center pb-[4px]">
                        <Num cls="pb-[7px]">0</Num>
                        <span className="mt-[5px] whitespace-nowrap">Duplicated Blocks</span>
                      </div>
                    </div>
                  </div>
                </div>
                {/* activity */}
                <div className="flex h-[72px] items-center pt-[12px] text-[18px] font-bold text-[#444]">ACTIVITY</div>
                <div className="flex h-[100px] border-[2px] border-[#e6e6e6] bg-white">
                  <div className="flex w-[939px] shrink-0 items-start border-r-[2px] border-[#e6e6e6] pl-[25px] pt-[25px]">
                    <div className="flex h-[37px] w-[223px] items-center justify-between rounded-[2px] border-[2px] border-[#c9c9c9] bg-white pl-[12px] pr-[12px] text-[18px] text-[#444]">
                      <span>Issues</span>
                      <span className="h-0 w-0 border-x-[6px] border-t-[7px] border-x-transparent border-t-[#999]" />
                    </div>
                    <div className="ml-[165px] mt-[5px] flex">
                      <Legend c="#5c9bd1" label="Bugs" w={130} />
                      <Legend c="#2f6a97" label="Code Smells" w={194} />
                      <Legend c="#58c0dd" label="Vulnerabilities" w={160} />
                    </div>
                  </div>
                  <div className="flex-1 pl-[37px] pt-[33px]">
                    <div className="text-[18px] font-bold text-[#777]">November 13, 2020, 10:58 PM</div>
                    <div className="mt-[6px] h-[8px] w-[64px] rounded-t-[3px] bg-[#5c9bd1]" />
                  </div>
                </div>
              </div>
            </div>
          </div>
          <div className="pointer-events-none absolute bottom-0 left-0 right-0 h-[90px] bg-gradient-to-b from-transparent to-[#00000012]" />
        </div>
      </div>

      {/* window behind */}
      <div className="relative h-[22px] shrink-0">
        <div className="h-[16px] border-y-[2px] border-[#5a5a5a] bg-gradient-to-b from-[#7c7c7c] to-[#8d8d8d]" />
        <div className="h-[6px] bg-[#777]" />
      </div>

      {/* dock */}
      <div className="ml-[68px] mr-[66px] flex h-[104px] shrink-0 rounded-t-[10px] bg-gradient-to-b from-[#b1a0b2] to-[#c2adc0] pl-[6px]">
        {icons.map((ic, i) => (
          <DockItem
            key={i}
            icon={ic}
            dot={dots1.includes(i)}
            badge={i === 4 ? { text: "200", x: 48, y: 7, s: 38 } : i === 19 ? { text: "2", x: 45, y: 7, s: 31 } : undefined}
          />
        ))}
        <div className="flex w-[42.500px] shrink-0 items-center justify-center pb-[20px]"><span className="h-[76px] w-[1px] bg-[#6c5a6e]" /></div>
        {icons2.map((ic, i) => (
          <DockItem
            key={i}
            icon={ic}
            dot={dots2.includes(i)}
            badge={i === 2 ? { text: "1", x: 46, y: 7, s: 31 } : undefined}
          />
        ))}
        <div className="flex w-[42.500px] shrink-0 items-center justify-center pb-[20px]"><span className="h-[76px] w-[1px] bg-[#6c5a6e]" /></div>
        <DockItem icon={folderIcon} />
        <DockItem icon={trashIcon} />
      </div>
    </div>
  );
}
